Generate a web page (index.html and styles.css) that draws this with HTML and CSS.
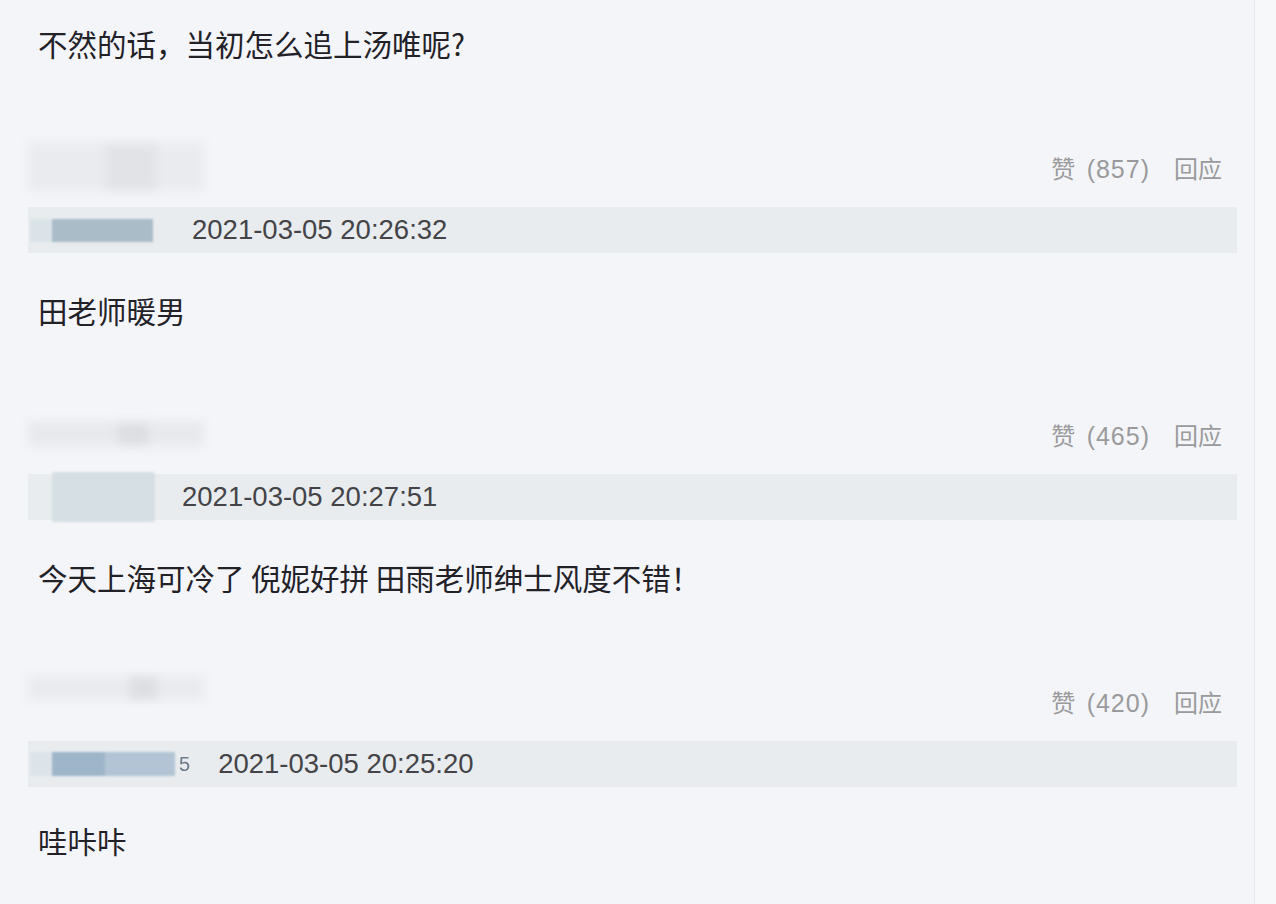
FILE: index.html
```html
<!DOCTYPE html>
<html lang="zh-CN">
<head>
  <meta charset="UTF-8">
  <meta name="viewport" content="width=device-width, initial-scale=1.0">
  <title>评论</title>
  <link rel="stylesheet" href="styles.css">
</head>
<body>
  <div class="page">
    <main class="thread">
      <!-- 上一条评论的正文 -->
      <p class="comment-text">不然的话，当初怎么追上汤唯呢?</p>

      <section class="comment">
        <div class="comment-head">
          <span class="user-name name-1"></span>
          <div class="actions">
            <span class="like">赞 <span class="num">(857)</span></span>
            <span class="reply">回应</span>
          </div>
        </div>
        <div class="meta">
          <span class="avatar av-1"></span>
          <span class="date date-1">2021-03-05 20:26:32</span>
        </div>
        <p class="comment-text">田老师暖男</p>
      </section>

      <section class="comment">
        <div class="comment-head">
          <span class="user-name name-2"></span>
          <div class="actions">
            <span class="like">赞 <span class="num">(465)</span></span>
            <span class="reply">回应</span>
          </div>
        </div>
        <div class="meta">
          <span class="avatar av-2"></span>
          <span class="date date-2">2021-03-05 20:27:51</span>
        </div>
        <p class="comment-text">今天上海可冷了 倪妮好拼 田雨老师绅士风度不错！</p>
      </section>

      <section class="comment last">
        <div class="comment-head">
          <span class="user-name name-3"></span>
          <div class="actions">
            <span class="like">赞 <span class="num">(420)</span></span>
            <span class="reply">回应</span>
          </div>
        </div>
        <div class="meta">
          <span class="avatar av-3"></span>
          <span class="tail">5</span>
          <span class="date date-3">2021-03-05 20:25:20</span>
        </div>
        <p class="comment-text">哇咔咔</p>
      </section>
    </main>
    <aside class="side"></aside>
  </div>
</body>
</html>
```

FILE: styles.css
```css
body {
  margin: 0;
  padding: 0;
  background-color: #f3f5f8;
  font-family: "Noto Sans CJK SC", "Liberation Sans", sans-serif;
  overflow: hidden;
}

.page {
  display: flex;
  height: 904px;
}

.thread {
  width: 1226px;
  padding: 23px 0 0 28px;
  border-right: 1px solid #e7e9ed;
}

.side {
  flex: 1;
  background-color: #f7f8fa;
}

.comment-text {
  margin: 0;
  padding-left: 10px;
  font-size: 29.5px;
  line-height: 40px;
  color: #232128;
}

.comment .comment-text {
  margin-top: 37px;
}

.comment.last .comment-text {
  margin-top: 33px;
}

.comment-head {
  display: flex;
  align-items: center;
  justify-content: space-between;
  width: 1209px;
  height: 50px;
  margin-top: 79px;
}

.user-name {
  display: block;
  width: 176px;
  background-color: #e6e8eb;
  filter: blur(5px);
}

.name-1 {
  height: 48px;
  background: linear-gradient(to right, #e9ebee 0 78px, #e1e3e6 78px 128px, #e9ebee 128px);
}

.name-2 {
  height: 24px;
  background: linear-gradient(to right, #e7e9ec 0 90px, #dcdee1 90px 120px, #e7e9ec 120px);
}

.name-3 {
  height: 24px;
  align-self: flex-start;
  background: linear-gradient(to right, #e9ebee 0 102px, #dcdee2 102px 128px, #e9ebee 128px);
}

.actions {
  display: flex;
  align-items: center;
  gap: 24px;
  margin-right: 15px;
  font-size: 24px;
  color: #9a9a9c;
}

.num {
  font-family: "Liberation Sans", sans-serif;
  font-size: 25px;
  letter-spacing: 1px;
  margin-left: 6px;
}

.meta {
  display: flex;
  align-items: center;
  width: 1209px;
  height: 46px;
  margin-top: 15px;
  background-color: #e8ecef;
}

.avatar {
  display: block;
  filter: blur(1px);
}

.av-1 {
  width: 123px;
  height: 23px;
  margin-left: 2px;
  background: linear-gradient(to right, #dbe3e8 0 22px, #a9bcc8 22px);
}

.av-2 {
  width: 103px;
  height: 50px;
  margin-left: 24px;
  border-radius: 3px;
  background-color: #d5dfe4;
}

.av-3 {
  width: 145px;
  height: 24px;
  margin-left: 2px;
  background: linear-gradient(to right, #dce4ea 0 22px, #9fb6ca 22px 75px, #b3c5d4 75px);
}

.tail {
  font-family: "Liberation Sans", sans-serif;
  font-size: 20px;
  color: #6d7a88;
  margin-left: 4px;
  filter: blur(0.6px);
}

.date {
  font-family: "Liberation Sans", sans-serif;
  font-size: 27.5px;
  color: #444448;
}

.date-1 {
  margin-left: 39px;
}

.date-2 {
  margin-left: 27px;
}

.date-3 {
  margin-left: 28px;
}
```
